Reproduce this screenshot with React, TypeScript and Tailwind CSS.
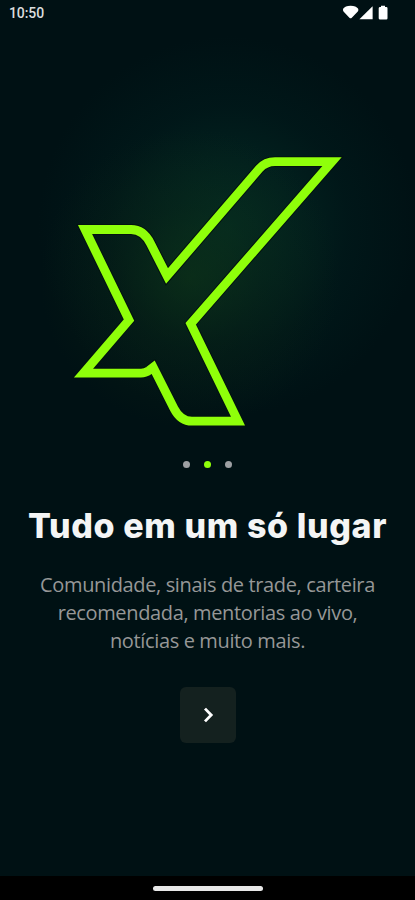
const slides = ["Sinais", "Tudo em um só lugar", "Comece agora"];

const activeSlide = 1;

const description = [
  "Comunidade, sinais de trade, carteira",
  "recomendada, mentorias ao vivo,",
  "notícias e muito mais.",
];

const markPath =
  "M332 161.7H275Q265.5 161.7 259.3 168.7L167 276L150.5 243.5Q143.5 229.5 131 229.5H85L129 320L83.5 373.1H141Q145.5 373.1 149 370.5L153.2 367.2L174 408.5Q180.5 421.2 192 421.2H238L190.7 323.8Z";

function StatusBar() {
  return (
    <header className="flex h-[26px] items-center justify-between pl-[9px] pr-[27px]">
      <span className="font-['Roboto',sans-serif] text-[14px] font-medium leading-none tracking-[-0.1px] text-[#dcdedf]">
        10:50
      </span>
      <svg width="46" height="16" viewBox="342 5 46 16" fill="#fff">
        {/* wifi */}
        <path d="M343.3 8.6Q345 5.7 350.6 5.7T358 8.6Q359 10 357.8 11.5L351.8 17.8Q350.6 18.8 349.4 17.8L343.5 11.5Q342.4 10 343.3 8.6Z" />
        {/* signal */}
        <path d="M372.6 6.2V19.3H359.4Z" />
        {/* battery */}
        <path d="M381 5.7h4v1.2h1.3q1.2 0 1.2 1.4v9.9q0 1.4-1.2 1.4h-6.2q-1.4 0-1.4-1.4V8.3q0-1.4 1.4-1.4h.9Z" />
      </svg>
    </header>
  );
}

function BrandMark() {
  return (
    <svg width="415" height="410" viewBox="0 26 415 410" fill="none">
      <path d={markPath} stroke="#03120f" strokeWidth="10.8" strokeMiterlimit="10" />
      <path d={markPath} stroke="#8fff0a" strokeWidth="8.8" strokeMiterlimit="10" />
    </svg>
  );
}

export default function App() {
  return (
    <main className="flex h-[900px] w-[415px] flex-col overflow-hidden bg-[#001114]">
      <div className="flex h-[876px] flex-col bg-[radial-gradient(circle_at_190px_278px,rgba(18,56,20,0.5)_0px,rgba(13,42,20,0.32)_70px,transparent_150px),radial-gradient(circle_at_228px_226px,rgba(4,50,38,0.8)_0px,rgba(3,42,36,0.62)_65px,rgba(1,30,30,0.45)_120px,transparent_190px)]">
        <StatusBar />
        <BrandMark />

        <div className="mt-[25px] flex justify-center gap-3.5">
          {slides.map((slide, i) => (
            <span
              key={slide}
              className={`size-[7px] rounded-full ${
                i === activeSlide ? "bg-[#8fff0a]" : "bg-[#9da0a3]"
              }`}
            />
          ))}
        </div>

        <h1 className="mt-[38px] whitespace-nowrap text-center font-['Inter',sans-serif] text-[34px] font-extrabold leading-[40px] tracking-[0.62px] text-[#f4f5f5]">
          {slides[activeSlide]}
        </h1>

        <p className="mt-[25px] whitespace-nowrap text-center font-['Open_Sans',sans-serif] text-[20px] leading-[28px] tracking-[-0.36px] text-[#969797]">
          {description.map((line) => (
            <span key={line} className="block">
              {line}
            </span>
          ))}
        </p>

        <button className="mx-auto mt-[32px] flex size-14 items-center justify-center rounded-md bg-[#14211f]">
          <svg width="12" height="18" viewBox="0 0 12 18" fill="none">
            <path d="M3 2.6L9.2 9L3 15.4" stroke="#fff" strokeWidth="2.8" />
          </svg>
        </button>
      </div>

      <footer className="flex h-6 justify-center bg-black pt-[10px]">
        <div className="h-[5px] w-[110px] rounded-full bg-[#e8e8e8]" />
      </footer>
    </main>
  );
}
